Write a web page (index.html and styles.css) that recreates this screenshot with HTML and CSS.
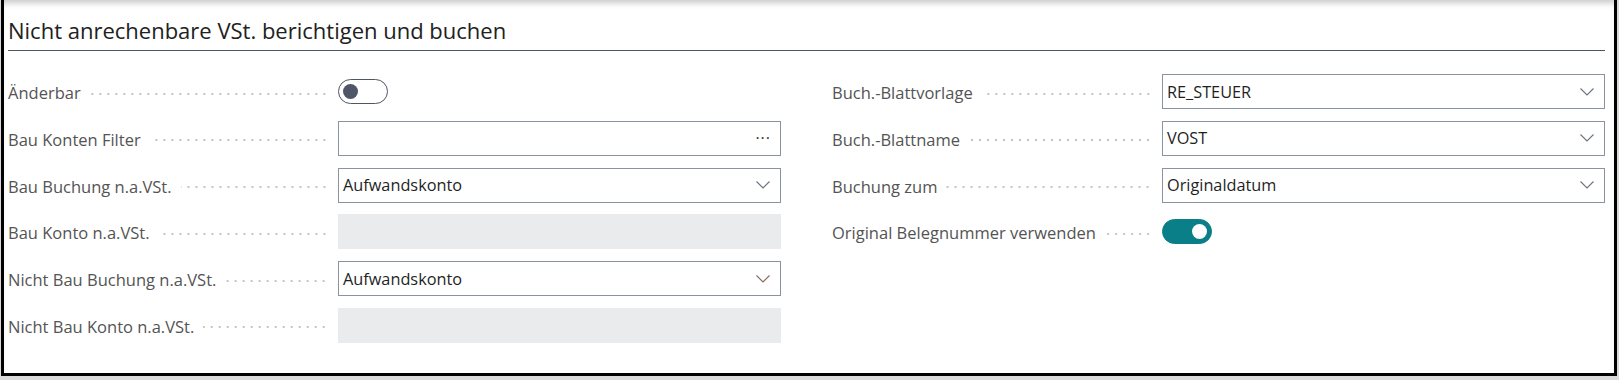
FILE: index.html
```html
<!DOCTYPE html>
<html lang="de">
<head>
    <meta charset="UTF-8">
    <meta name="viewport" content="width=device-width, initial-scale=1.0">
    <title>Nicht anrechenbare VSt. berichtigen und buchen</title>
    <link rel="stylesheet" href="styles.css">
</head>
<body>
    <div class="frame">
        <div class="page">
            <h2 class="group-title">Nicht anrechenbare VSt. berichtigen und buchen</h2>

            <div class="columns">
                <div class="col">
                    <div class="field-row">
                        <div class="caption"><span>Änderbar</span></div>
                        <div class="control">
                            <span class="toggle"><span class="knob"></span></span>
                        </div>
                    </div>
                    <div class="field-row">
                        <div class="caption"><span>Bau Konten Filter</span></div>
                        <div class="control">
                            <div class="input">
                                <span class="value"></span>
                                <span class="ellipsis">&middot;&middot;&middot;</span>
                            </div>
                        </div>
                    </div>
                    <div class="field-row">
                        <div class="caption"><span>Bau Buchung n.a.VSt.</span></div>
                        <div class="control">
                            <div class="input">
                                <span class="value">Aufwandskonto</span>
                                <svg class="chevron" width="14" height="8" viewBox="0 0 14 8"><path d="M0.5 0.5 L7 7 L13.5 0.5" fill="none" stroke="#6b7380" stroke-width="1.1"/></svg>
                            </div>
                        </div>
                    </div>
                    <div class="field-row">
                        <div class="caption"><span>Bau Konto n.a.VSt.</span></div>
                        <div class="control">
                            <div class="input disabled"></div>
                        </div>
                    </div>
                    <div class="field-row">
                        <div class="caption"><span>Nicht Bau Buchung n.a.VSt.</span></div>
                        <div class="control">
                            <div class="input">
                                <span class="value">Aufwandskonto</span>
                                <svg class="chevron" width="14" height="8" viewBox="0 0 14 8"><path d="M0.5 0.5 L7 7 L13.5 0.5" fill="none" stroke="#8a6a60" stroke-width="1.1"/></svg>
                            </div>
                        </div>
                    </div>
                    <div class="field-row">
                        <div class="caption"><span>Nicht Bau Konto n.a.VSt.</span></div>
                        <div class="control">
                            <div class="input disabled"></div>
                        </div>
                    </div>
                </div>

                <div class="col">
                    <div class="field-row">
                        <div class="caption"><span>Buch.-Blattvorlage</span></div>
                        <div class="control">
                            <div class="input">
                                <span class="value">RE_STEUER</span>
                                <svg class="chevron" width="14" height="8" viewBox="0 0 14 8"><path d="M0.5 0.5 L7 7 L13.5 0.5" fill="none" stroke="#6b7380" stroke-width="1.1"/></svg>
                            </div>
                        </div>
                    </div>
                    <div class="field-row">
                        <div class="caption"><span>Buch.-Blattname</span></div>
                        <div class="control">
                            <div class="input">
                                <span class="value">VOST</span>
                                <svg class="chevron" width="14" height="8" viewBox="0 0 14 8"><path d="M0.5 0.5 L7 7 L13.5 0.5" fill="none" stroke="#6b7380" stroke-width="1.1"/></svg>
                            </div>
                        </div>
                    </div>
                    <div class="field-row">
                        <div class="caption"><span>Buchung zum</span></div>
                        <div class="control">
                            <div class="input">
                                <span class="value">Originaldatum</span>
                                <svg class="chevron" width="14" height="8" viewBox="0 0 14 8"><path d="M0.5 0.5 L7 7 L13.5 0.5" fill="none" stroke="#6b7380" stroke-width="1.1"/></svg>
                            </div>
                        </div>
                    </div>
                    <div class="field-row">
                        <div class="caption"><span>Original Belegnummer verwenden</span></div>
                        <div class="control">
                            <span class="toggle on"><span class="knob"></span></span>
                        </div>
                    </div>
                </div>
            </div>
        </div>
    </div>
</body>
</html>
```

FILE: styles.css
```css
html, body {
    margin: 0;
    padding: 0;
}
body {
    width: 1619px;
    height: 380px;
    background-color: #d9d9d9;
    font-family: "Open Sans", "Noto Sans", Arial, sans-serif;
    overflow: hidden;
}
.frame {
    box-sizing: border-box;
    height: 376px;
    margin: 0 2px 0 1px;
    background-color: #fff;
    border-left: 3px solid #000;
    border-right: 3px solid #000;
    border-bottom: 3px solid #000;
    box-shadow: inset 0 7px 6px -4px rgba(0, 0, 0, 0.22);
}
.page {
    padding: 0 9px 0 4px;
}
.group-title {
    margin: 0;
    padding: 17px 0 7px 0;
    font-size: 22px;
    line-height: 26px;
    font-weight: 400;
    color: #212121;
    border-bottom: 1px solid #4f5762;
}
.columns {
    display: grid;
    grid-template-columns: 1fr 1fr;
    column-gap: 51px;
    margin-top: 23px;
}
.field-row {
    display: flex;
    align-items: center;
    height: 35px;
    margin-bottom: 11.75px;
}
.caption {
    box-sizing: border-box;
    display: flex;
    align-items: center;
    flex: 0 0 330px;
    padding-right: 10px;
    padding-top: 2px;
    font-size: 16.5px;
    color: #545454;
    white-space: nowrap;
}
.caption::after {
    content: "";
    flex: 1;
    height: 2px;
    margin-left: 9px;
    margin-top: 2px;
    background-image: radial-gradient(circle, #c4c4c4 0.9px, transparent 1.1px);
    background-size: 8px 2px;
    background-position: right center;
    background-repeat: repeat-x;
}
.control {
    flex: 1;
    display: flex;
    align-items: center;
}
.input {
    box-sizing: border-box;
    display: flex;
    align-items: center;
    width: 100%;
    height: 35px;
    padding: 0 10px 0 4px;
    border: 1px solid #8a93a0;
    background-color: #fff;
}
.input.disabled {
    border-color: #eaebec;
    background-color: #eaebec;
}
.value {
    flex: 1;
    font-size: 16.3px;
    color: #1f1f1f;
}
.ellipsis {
    font-size: 16px;
    letter-spacing: 1px;
    color: #333;
    margin-right: -1px;
}
.chevron {
    display: block;
}
.toggle {
    box-sizing: border-box;
    position: relative;
    display: inline-block;
    width: 50px;
    height: 25px;
    border: 1px solid #4f5762;
    border-radius: 13px;
    background-color: #fff;
}
.toggle .knob {
    position: absolute;
    top: 4px;
    left: 4px;
    width: 15px;
    height: 15px;
    border-radius: 50%;
    background-color: #4f5668;
}
.toggle.on {
    border-color: #0b7f88;
    background-color: #0b7f88;
}
.toggle.on .knob {
    left: auto;
    right: 4px;
    background-color: #fff;
}
```
